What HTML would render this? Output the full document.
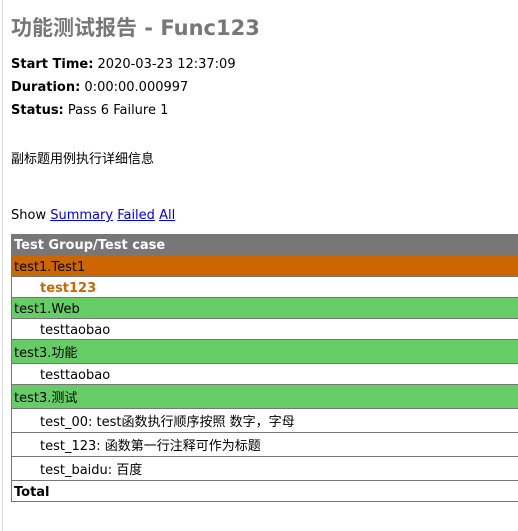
<!DOCTYPE html>
<html><head><meta charset="utf-8"><style>
body{margin:0;width:518px;height:531px;overflow:hidden;background:#fff;font-family:"DejaVu Sans",Verdana,"Noto Sans CJK SC",sans-serif;font-size:13px;color:#000;position:relative}
.vl{position:absolute;left:2px;top:0;width:1px;height:531px;background:#ddd}
.a{position:absolute;left:11px;white-space:nowrap}
h1{position:absolute;left:11px;top:12px;margin:0;font-size:21px;color:#777;font-weight:bold;white-space:nowrap}
a{color:#00e;text-decoration:underline}
table{position:absolute;left:11px;top:234px;width:520px;border-collapse:collapse}
td{border:1px solid #777;padding:4px 0 0 2px;height:16px;white-space:nowrap;line-height:16px;vertical-align:top}
.h td{background:#777;color:#fff;font-weight:bold;height:17px;border-top:none}
.f td{background:#c60}
.p td{background:#6c6}
.c td{padding-left:28px}
.r td{padding-top:6px;height:17px}
</style></head><body>
<div class="vl"></div>
<h1>功能测试报告 - Func123</h1>
<div class="a" style="top:57px"><b>Start Time:</b> 2020-03-23 12:37:09</div>
<div class="a" style="top:80px"><b>Duration:</b> 0:00:00.000997</div>
<div class="a" style="top:103px"><b>Status:</b> Pass 6 Failure 1</div>
<div class="a" style="top:148px">副标题用例执行详细信息</div>
<div class="a" style="top:208px">Show <a>Summary</a> <a>Failed</a> <a>All</a></div>
<table>
<tr class="h"><td>Test Group/Test case</td></tr>
<tr class="f"><td>test1.Test1</td></tr>
<tr class="c"><td style="color:#c60;font-weight:bold">test123</td></tr>
<tr class="p"><td>test1.Web</td></tr>
<tr class="c"><td>testtaobao</td></tr>
<tr class="p r"><td>test3.功能</td></tr>
<tr class="c"><td>testtaobao</td></tr>
<tr class="p r"><td>test3.测试</td></tr>
<tr class="c r"><td>test_00: test函数执行顺序按照 数字，字母</td></tr>
<tr class="c r"><td>test_123: 函数第一行注释可作为标题</td></tr>
<tr class="c r"><td>test_baidu: 百度</td></tr>
<tr><td style="font-weight:bold">Total</td></tr>
</table>
</body></html>
